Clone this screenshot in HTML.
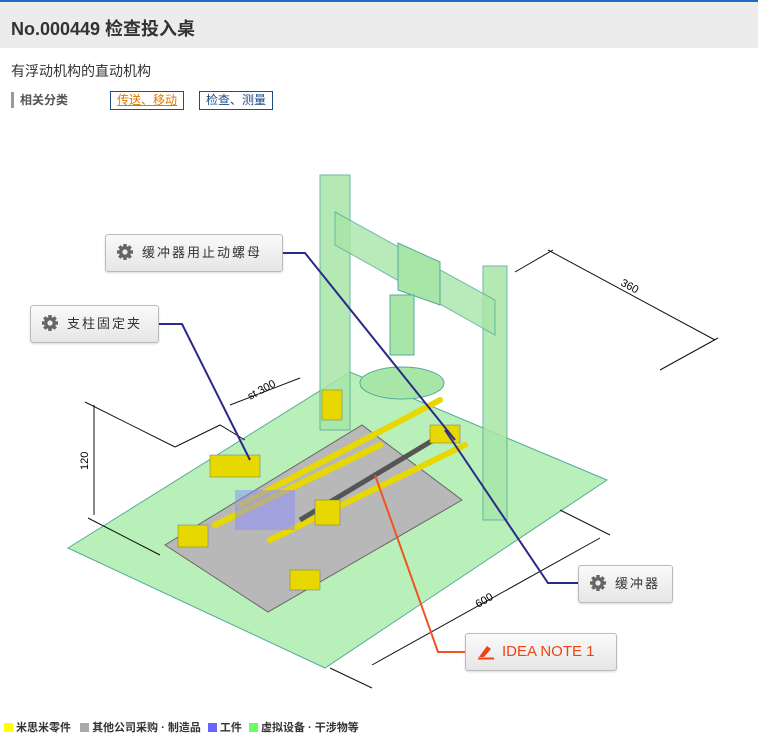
<!DOCTYPE html>
<html><head><meta charset="utf-8"><style>
body{margin:0;width:758px;height:746px;background:#fff;font-family:"Liberation Sans","Noto Sans CJK SC",sans-serif;position:relative;overflow:hidden}
.top{position:absolute;left:0;top:0;width:758px;height:2px;background:#1d6ec1}
.hd{position:absolute;left:0;top:2px;width:758px;height:46px;background:#ececec}
.hd span{position:absolute;left:11px;top:13px;font-size:18px;font-weight:bold;color:#333}
.sub{position:absolute;left:11px;top:61px;font-size:14px;color:#333}
.cat{position:absolute;left:11px;top:92px;height:16px;border-left:3px solid #999;padding-left:6px;font-size:12px;font-weight:bold;color:#555;line-height:16px}
.tag{position:absolute;top:91px;height:17px;border:1px solid #1f4b8a;font-size:12px;line-height:17px;padding:0 6px}
.call{position:absolute;border:1px solid #bbb;border-radius:3px;background:linear-gradient(#fafafa,#e6e6e6);font-size:13px;color:#333;letter-spacing:2px;line-height:36px;box-shadow:0 1px 2px rgba(0,0,0,.15)}
.call svg{vertical-align:-4px;margin:0 8px 0 10px}
.leg{position:absolute;top:719px;left:4px;font-size:11px;color:#333;font-weight:bold}
.sq{display:inline-block;width:9px;height:9px;vertical-align:-1px;margin-right:3px}
</style></head><body>
<div class="top"></div>
<div class="hd"><span>No.000449 检查投入桌</span></div>
<div class="sub">有浮动机构的直动机构</div>
<div class="cat">相关分类</div>
<div class="tag" style="left:110px;color:#e07b00;text-decoration:underline">传送、移动</div>
<div class="tag" style="left:199px;color:#1f4b8a">检查、测量</div>
<svg width="0" height="0" style="position:absolute"><defs><g id="gear"><circle cx="9" cy="9" r="6" fill="#666"/><g stroke="#666" stroke-width="3.4"><line x1="9" y1="1" x2="9" y2="17"/><line x1="1" y1="9" x2="17" y2="9"/><line x1="3.3" y1="3.3" x2="14.7" y2="14.7"/><line x1="14.7" y1="3.3" x2="3.3" y2="14.7"/></g><circle cx="9" cy="9" r="2.6" fill="#eee"/></g></defs></svg>
<svg style="position:absolute;left:0;top:0" width="758" height="746">
<polygon points="68,548 325,668 607,480 350,372" fill="#b9f0b9" stroke="#5a9" stroke-width="1"/>
<polygon points="165,545 268,612 462,500 362,425" fill="#b8b8b8" stroke="#666"/>
<polygon points="320,175 350,175 350,430 320,430" fill="#a8e6a8" stroke="#5a9" opacity=".85"/>
<polygon points="483,266 507,266 507,520 483,520" fill="#a8e6a8" stroke="#5a9" opacity=".85"/>
<polygon points="335,212 495,300 495,335 335,245" fill="#a8e6a8" stroke="#5a9" opacity=".8"/>
<polygon points="398,243 440,262 440,305 398,290" fill="#a8e6a8" stroke="#5a9"/>
<ellipse cx="402" cy="383" rx="42" ry="16" fill="#a8e6a8" stroke="#5a9"/>
<rect x="390" y="295" width="24" height="60" fill="#a8e6a8" stroke="#5a9"/>
<g stroke="#e6d800" stroke-width="6" stroke-linecap="round"><line x1="240" y1="505" x2="440" y2="400"/><line x1="270" y1="540" x2="465" y2="445"/><line x1="215" y1="525" x2="380" y2="445"/></g>
<g stroke="#555" stroke-width="5"><line x1="300" y1="520" x2="450" y2="430"/></g>
<rect x="235" y="490" width="60" height="40" fill="#8a8aff" opacity=".5"/>
<g fill="#e6d800" stroke="#775" stroke-width=".5"><rect x="210" y="455" width="50" height="22"/><rect x="178" y="525" width="30" height="22"/><rect x="290" y="570" width="30" height="20"/><rect x="322" y="390" width="20" height="30"/><rect x="430" y="425" width="30" height="18"/><rect x="315" y="500" width="25" height="25"/></g>
<g stroke="#111" stroke-width="1" fill="none"><line x1="85" y1="402" x2="175" y2="447"/><line x1="88" y1="518" x2="160" y2="555"/><line x1="94" y1="405" x2="94" y2="515"/><line x1="548" y1="250" x2="715" y2="340"/><line x1="515" y1="272" x2="553" y2="250"/><line x1="660" y1="370" x2="718" y2="338"/><line x1="372" y1="665" x2="600" y2="538"/><line x1="330" y1="668" x2="372" y2="688"/><line x1="560" y1="510" x2="610" y2="535"/><line x1="230" y1="405" x2="300" y2="378"/><polyline points="175,447 220,425 245,440"/></g>
<text x="88" y="470" font-size="11" transform="rotate(-90 88 470)" font-family="Liberation Sans">120</text>
<text x="620" y="285" font-size="11" transform="rotate(28 620 285)" font-family="Liberation Sans">360</text>
<text x="250" y="400" font-size="11" transform="rotate(-28 250 400)" font-family="Liberation Sans">st 300</text>
<text x="478" y="608" font-size="11" transform="rotate(-30 478 608)" font-family="Liberation Sans">600</text>
<g stroke="#2a2a8a" stroke-width="2" fill="none"><polyline points="282,253 305,253 455,440"/><polyline points="158,324 182,324 250,460"/><polyline points="578,583 548,583 445,430"/></g>
<polyline points="465,652 438,652 375,475" stroke="#ee5522" stroke-width="2" fill="none"/>
</svg>
<div class="call" style="left:105px;top:234px;width:176px"><svg width="18" height="18"><use href="#gear"/></svg>缓冲器用止动螺母</div>
<div class="call" style="left:30px;top:305px;width:127px"><svg width="18" height="18"><use href="#gear"/></svg>支柱固定夹</div>
<div class="call" style="left:578px;top:565px;width:93px"><svg width="18" height="18"><use href="#gear"/></svg>缓冲器</div>
<div class="call" style="left:465px;top:633px;width:150px;color:#ee4411;letter-spacing:0;font-size:15px"><svg width="20" height="18" style="margin:0 6px 0 10px"><path d="M3 15 L11 4 L15 7 L8 15 Z" fill="#ee4411"/><line x1="2" y1="16.5" x2="18" y2="16.5" stroke="#ee4411" stroke-width="2"/></svg>IDEA NOTE 1</div>
<div class="leg"><span class="sq" style="background:#ff0"></span>米思米零件 <span class="sq" style="background:#aaa;margin-left:6px"></span>其他公司采购 · 制造品 <span class="sq" style="background:#66f;margin-left:4px"></span>工件 <span class="sq" style="background:#6f6;margin-left:4px"></span>虚拟设备 · 干涉物等</div>
</body></html>
